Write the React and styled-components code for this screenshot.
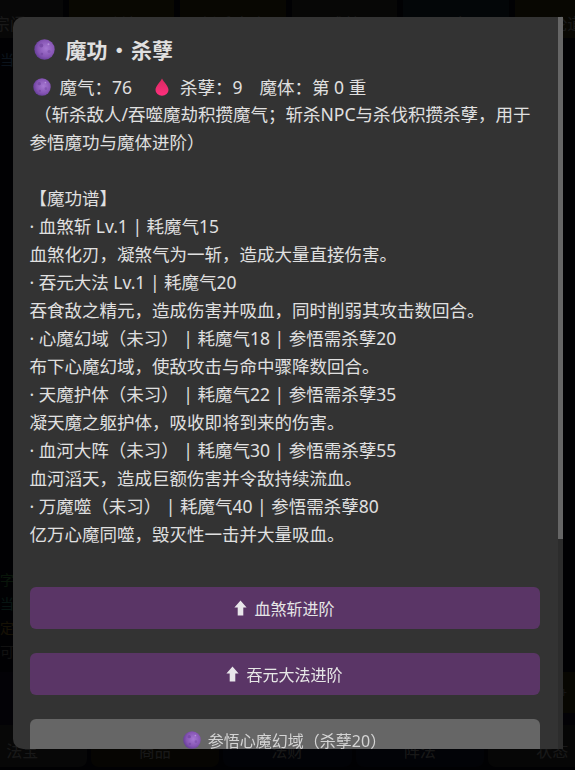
import React from "react";
import styled, { createGlobalStyle } from "styled-components";

const FONT = `"Noto Sans", "Noto Sans CJK SC", "Liberation Sans", sans-serif`;
const CJK_FIRST = `"Noto Sans CJK SC", "Noto Sans", sans-serif`;

const Global = createGlobalStyle`
  html, body { margin: 0; padding: 0; background: #000; height: 100%; overflow: hidden; }
  body { font-family: ${FONT}; }
  * { box-sizing: border-box; }
`;

const Page = styled.div`
  height: 100vh;
  overflow: hidden;
  display: flex;
  flex-direction: column;
  background: #0c0c14;
`;
const TopTabs = styled.div`
  display: flex;
  gap: 6px;
  margin-left: -43px;
  height: 38px;
  flex: none;
`;
const TopTab = styled.div`
  flex: none;
  width: 105.5px;
  border-radius: 0 0 8px 8px;
  background: ${(p) => p.$bg};
  color: #a0a0a0;
  font-size: 16px;
  display: flex;
  align-items: center;
  justify-content: center;
  gap: 6px;
  padding-top: 8px;
`;
const Hint = styled.div`
  color: #4a80b8;
  font-size: 14px;
  line-height: 24px;
  margin-top: 10px;
`;
const Spacer = styled.div`flex: 1;`;
const LogLine = styled.div`
  color: ${(p) => p.$c};
  font-size: 14px;
  line-height: 24px;
  white-space: nowrap;
`;
const Band = styled.div`
  flex: none;
  height: 53px;
  margin-top: 8px;
  background: #16122a;
  display: flex;
  justify-content: flex-end;
`;
const BandEnd = styled.div`
  width: 40px;
  height: 41px;
  background: #383012;
  color: #888;
  font-size: 16px;
  line-height: 41px;
  padding-left: 16px;
`;
const BottomTabs = styled.div`
  flex: none;
  display: flex;
  gap: 4px;
  margin-left: -42px;
  height: 42px;
  margin-bottom: 3px;
`;
const BottomTab = styled.div`
  flex: none;
  width: 128.5px;
  border-radius: 0 0 8px 8px;
  background: ${(p) => p.$bg};
  color: #a0a0a0;
  font-size: 16px;
  display: flex;
  align-items: center;
  justify-content: center;
  padding-top: 8px;
`;

const Overlay = styled.div`
  position: fixed;
  inset: 0;
  background: rgba(0, 0, 0, 0.85);
  display: flex;
  align-items: flex-start;
  justify-content: center;
  padding-top: 17px;
`;
const Modal = styled.div`
  position: relative;
  width: 550px;
  height: 732px;
  overflow: hidden;
  background: #333;
  border-radius: 10px 0 0 10px;
`;
const Scroller = styled.div`
  height: 100%;
  overflow-y: auto;
  padding: 17px 23px 18px 17px;
  color: #e0e0e0;
  scrollbar-width: none;
`;
const Track = styled.div`
  position: absolute;
  top: 0;
  right: 0;
  bottom: 0;
  width: 5px;
  background: #2c2c2c;
`;
const Thumb = styled.div`
  width: 100%;
  height: 522px;
  background: #666;
`;
const Title = styled.h3`
  margin: 0 0 10px;
  display: flex;
  align-items: center;
  gap: 11px;
  padding-left: 4px;
  font-family: ${CJK_FIRST};
  font-size: 21px;
  line-height: 30px;
  font-weight: 700;
  word-spacing: -3.5px;
  color: #e0e0e0;
`;
const Body = styled.div`
  font-size: 17.5px;
  line-height: 28px;
  color: #e0e0e0;
  white-space: pre-wrap;
`;
const Stats = styled.div`
  display: flex;
  align-items: center;
  height: 26px;
  padding-left: 3px;
  white-space: pre;
`;
const StatIcon = styled.span`
  display: inline-flex;
  margin: ${(p) => p.$m || "0 9px 0 0"};
`;
const Stat = styled.span`
  margin-right: ${(p) => p.$r || 0}px;
`;
const Actions = styled.div`
  margin-top: 39px;
  display: flex;
  flex-direction: column;
  gap: 24px;
`;
const Action = styled.button`
  flex: none;
  height: 42px;
  border: 0;
  border-radius: 6px;
  width: 100%;
  background: ${(p) => (p.$dim ? "#666" : "#5a3566")};
  color: ${(p) => (p.$dim ? "#d4d4d4" : "#e6e6e6")};
  font-family: ${FONT};
  font-size: 16px;
  display: flex;
  align-items: center;
  justify-content: center;
  gap: 7px;
`;

const Orb = ({ size = 18 }) => (
  <svg width={size} height={size} viewBox="0 0 32 32">
    <defs>
      <radialGradient id="orbfill" cx="58%" cy="45%" r="62%">
        <stop offset="0%" stopColor="#a678d2" />
        <stop offset="65%" stopColor="#8655b4" />
        <stop offset="100%" stopColor="#613a94" />
      </radialGradient>
    </defs>
    <circle cx="16" cy="16" r="15.5" fill="url(#orbfill)" />
    <circle cx="11" cy="10" r="3" fill="#7a4ca8" />
    <circle cx="23" cy="19" r="2.4" fill="#8456b2" />
    <circle cx="12" cy="23" r="2" fill="#7a4ca8" />
    <circle cx="22" cy="8" r="1.5" fill="#b590da" />
  </svg>
);
const Drop = () => (
  <svg width="14" height="18" viewBox="0 0 14 18">
    <defs>
      <linearGradient id="dropfill" x1="0" y1="0" x2="0" y2="1">
        <stop offset="0%" stopColor="#d92a60" />
        <stop offset="100%" stopColor="#ff2f7e" />
      </linearGradient>
    </defs>
    <path d="M7 0.5 C8.5 4 13.5 8 13.5 12 A6.5 5.8 0 0 1 0.5 12 C0.5 8 5.5 4 7 0.5 Z" fill="url(#dropfill)" />
  </svg>
);
const Up = () => (
  <svg width="13" height="16" viewBox="0 0 13 16">
    <path d="M6.5 0.5 L12.6 7.5 H9.3 V15.5 H3.7 V7.5 H0.4 Z" fill="#e8e6ea" />
  </svg>
);

const top = [
  ["宗门", "#303030"], ["功法", "#403510"], ["新手攻略", "#393210"],
  ["成就", "#333328"], ["飞行", "#142838"], ["论道", "#393210"],
];
const bottom = [
  ["法宝", "#303030"], ["商品", "#2c2410"], ["法财", "#12152e"],
  ["阵法", "#12152e"], ["状态", "#2c2c2c"],
];

const CM = "\uFF0C";
const CL = "\uFF1A";
const SC = "\uFF1B";
const LP = "\uFF08";
const RP = "\uFF09";

const lines = [
  ` ${LP}斩杀敌人/吞噬魔劫积攒魔气${SC}斩杀NPC与杀伐积攒杀孽${CM}用于`,
  `参悟魔功与魔体进阶${RP}`,
  "",
  "【魔功谱】",
  "· 血煞斩 Lv.1 | 耗魔气15",
  `血煞化刃${CM}凝煞气为一斩${CM}造成大量直接伤害。`,
  "· 吞元大法 Lv.1 | 耗魔气20",
  `吞食敌之精元${CM}造成伤害并吸血${CM}同时削弱其攻击数回合。`,
  `· 心魔幻域${LP}未习${RP} | 耗魔气18 | 参悟需杀孽20`,
  `布下心魔幻域${CM}使敌攻击与命中骤降数回合。`,
  `· 天魔护体${LP}未习${RP} | 耗魔气22 | 参悟需杀孽35`,
  `凝天魔之躯护体${CM}吸收即将到来的伤害。`,
  `· 血河大阵${LP}未习${RP} | 耗魔气30 | 参悟需杀孽55`,
  `血河滔天${CM}造成巨额伤害并令敌持续流血。`,
  `· 万魔噬${LP}未习${RP} | 耗魔气40 | 参悟需杀孽80`,
  `亿万心魔同噬${CM}毁灭性一击并大量吸血。`,
];

export default function App() {
  return (
    <>
      <Global />
      <Page>
        <TopTabs>
          {top.map(([t, c]) => <TopTab key={t} $bg={c}>{t}</TopTab>)}
        </TopTabs>
        <Hint>当前位置</Hint>
        <Spacer />
        <LogLine $c="#3c9048">字符</LogLine>
        <LogLine $c="#30887c">当前</LogLine>
        <LogLine $c="#967224">定位</LogLine>
        <LogLine $c="#707070">可破</LogLine>
        <Band><BandEnd>争</BandEnd></Band>
        <BottomTabs>
          {bottom.map(([t, c]) => <BottomTab key={t} $bg={c}>{t}</BottomTab>)}
        </BottomTabs>
      </Page>
      <Overlay>
        <Modal>
          <Scroller>
            <Title><Orb size={21} />魔功 · 杀孽</Title>
            <Body>
              <Stats>
                <StatIcon><Orb /></StatIcon>
                <Stat $r={23}>{`魔气${CL}76`}</Stat>
                <StatIcon $m="0 11px 0 0"><Drop /></StatIcon>
                <Stat $r={17}>{`杀孽${CL}9`}</Stat>
                <Stat>{`魔体${CL}第 0 重`}</Stat>
              </Stats>
              {lines.map((l, i) => <div key={i}>{l || " "}</div>)}
            </Body>
            <Actions>
              <Action><Up />血煞斩进阶</Action>
              <Action><Up />吞元大法进阶</Action>
              <Action $dim><Orb />{`参悟心魔幻域${LP}杀孽20${RP}`}</Action>
              <Action $dim><Orb />{`参悟天魔护体${LP}杀孽35${RP}`}</Action>
              <Action $dim><Orb />{`参悟血河大阵${LP}杀孽55${RP}`}</Action>
              <Action $dim><Orb />{`参悟万魔噬${LP}杀孽80${RP}`}</Action>
              <Action $dim>关闭</Action>
            </Actions>
          </Scroller>
          <Track><Thumb /></Track>
        </Modal>
      </Overlay>
    </>
  );
}
